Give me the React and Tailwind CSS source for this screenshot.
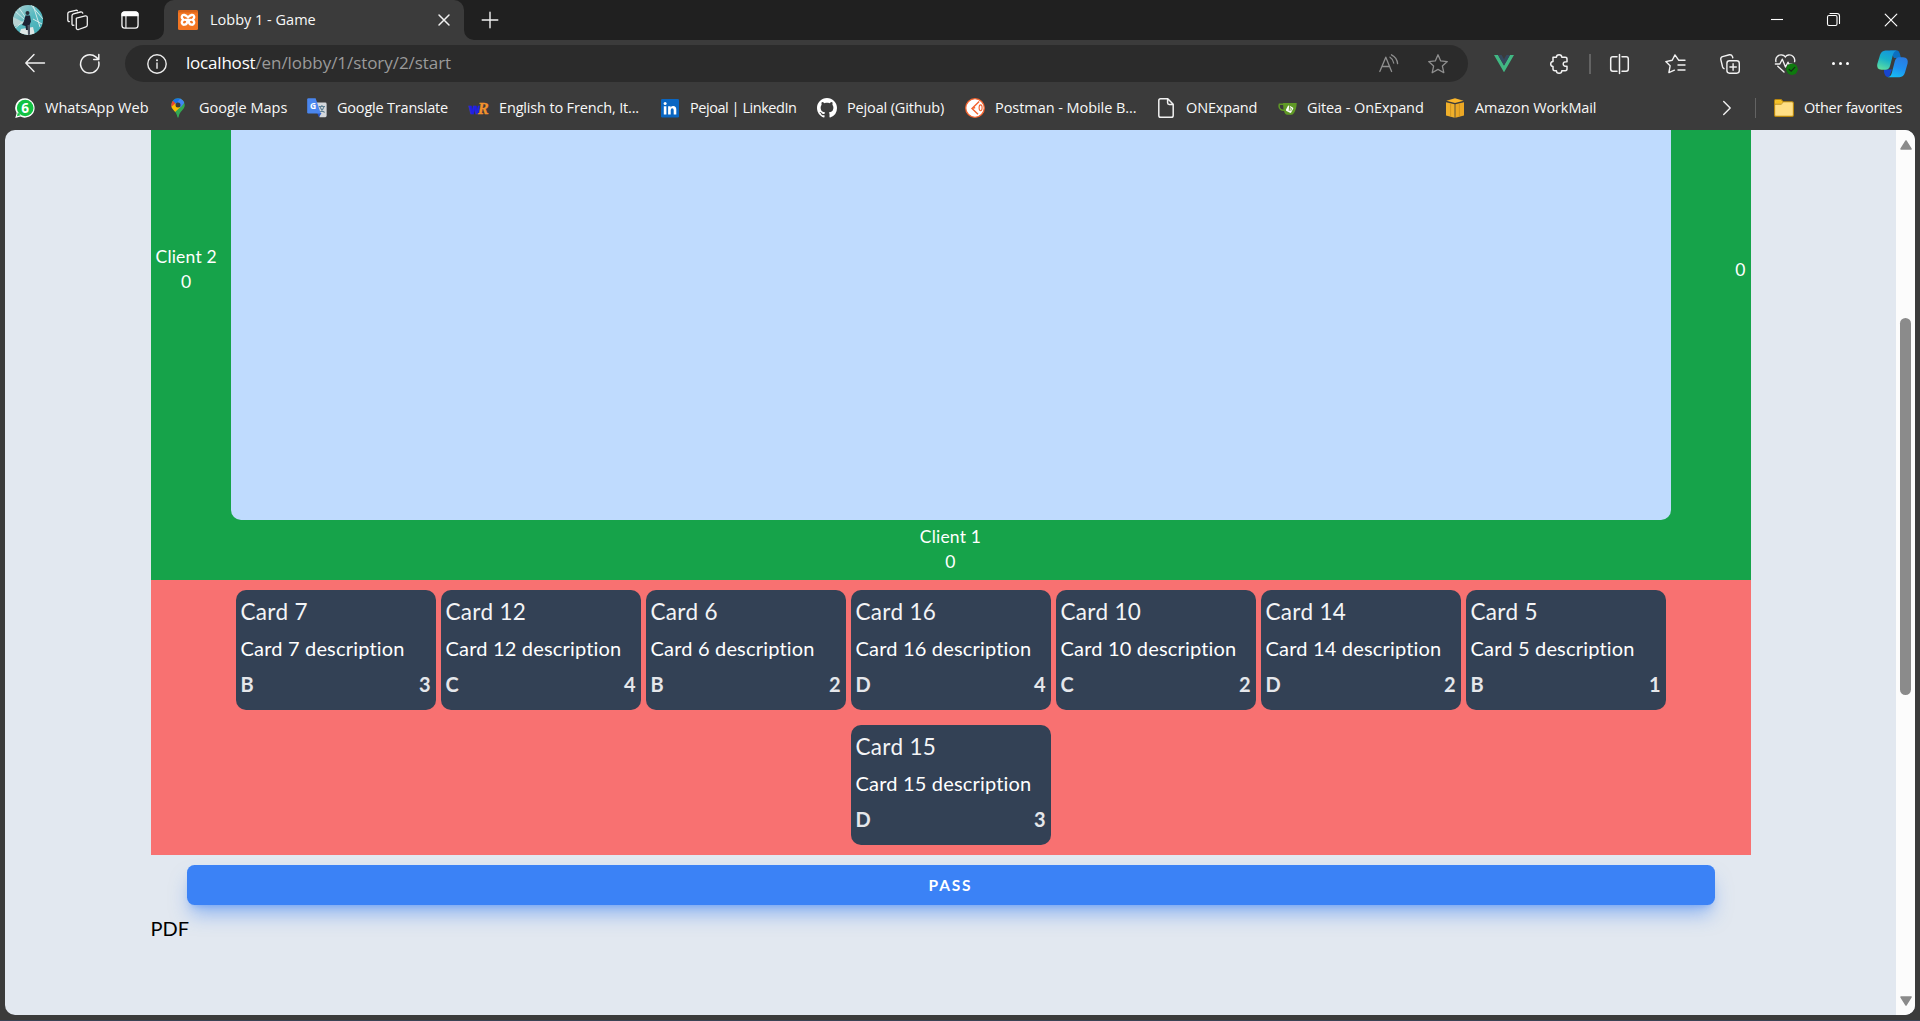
const cards = [
  { id: 7, suit: "B", value: 3 },
  { id: 12, suit: "C", value: 4 },
  { id: 6, suit: "B", value: 2 },
  { id: 16, suit: "D", value: 4 },
  { id: 10, suit: "C", value: 2 },
  { id: 14, suit: "D", value: 2 },
  { id: 5, suit: "B", value: 1 },
  { id: 15, suit: "D", value: 3 },
];

function Line({ w, h, box, sw = 1.4, color = "#f1f1f1", className = "", children }) {
  return (
    <svg width={w} height={h} viewBox={box || `0 0 ${w} ${h}`} fill="none" stroke={color} strokeWidth={sw} strokeLinecap="round" strokeLinejoin="round" className={`shrink-0 overflow-visible ${className}`}>
      {children}
    </svg>
  );
}

function Avatar() {
  return (
    <svg width="30" height="30" viewBox="0 0 30 30" className="shrink-0">
      <defs>
        <clipPath id="face"><circle cx="15" cy="15" r="15" /></clipPath>
        <linearGradient id="sea" x1="0" y1="0" x2="1" y2="1">
          <stop offset="0" stopColor="#b4cfd1" />
          <stop offset="0.5" stopColor="#58bac1" />
          <stop offset="1" stopColor="#3fabb3" />
        </linearGradient>
      </defs>
      <g clipPath="url(#face)">
        <rect width="30" height="30" fill="url(#sea)" />
        <path d="M0 12 L12 18 L0 22Z" fill="#b8d3d3" />
        <path d="M18 0 L30 14 M20 0 L27 22 M1 24 L12 15 M2 6 L12 15 M20 14 L29 19 M6 3 L13 13" stroke="#cfe9e8" strokeWidth="1" />
        <path d="M8 24 L20 22 L22 30 H6Z" fill="#dfe7e6" />
        <circle cx="14.5" cy="8" r="2" fill="#2a2d38" />
        <path d="M12.5 10.5 H17 L18 16.5 L16.6 20 L15.5 25 H13 L12.5 21 L9 20 L10.8 16.5Z" fill="#1d2233" />
        <path d="M14.5 20 L17 20 L17 30 H15Z" fill="#4d5562" />
      </g>
    </svg>
  );
}

function Tab() {
  return (
    <div className="relative flex h-[40px] w-[300px] shrink-0 items-center rounded-t-[10px] bg-[#3b3b3b] pl-[14px]">
      <svg width="10" height="10" className="absolute bottom-0 -left-[10px]"><path d="M10 0 V10 H0 A10 10 0 0 0 10 0Z" fill="#3b3b3b" /></svg>
      <svg width="10" height="10" className="absolute bottom-0 -right-[10px]"><path d="M0 0 V10 H10 A10 10 0 0 1 0 0Z" fill="#3b3b3b" /></svg>
      <svg width="20" height="20" viewBox="0 0 20 20" className="shrink-0">
        <rect width="20" height="20" rx="1.5" fill="#f37623" />
        <path d="M1 0 H19 L20 2.5 H0Z" fill="#d9641a" />
        <path d="M5.6 9.8 C2.4 7.6 4 4.6 6.4 5 C8.2 5.3 9 6.5 10 7.4 C11 6.5 11.8 5.3 13.6 5 C16 4.6 17.6 7.6 14.4 9.8 M5.6 9.8 C2.4 12 4 15 6.4 14.7 C8.2 14.4 9.2 13.2 9.2 11.4 M14.4 9.8 C17.6 12 16 15 13.6 14.7 C11.8 14.4 10.9 13.2 10.9 11.4 M7.2 9.8 H12.8" fill="none" stroke="#fff" strokeWidth="2.3" strokeLinecap="round" strokeLinejoin="round" />
      </svg>
      <span className="-mt-px ml-[12px] flex-1 text-[14.5px] leading-[20px] text-[#f8f8f8]">Lobby 1 - Game</span>
      <Line w={10} h={10} sw={1.5} className="mr-[15px]"><path d="M0 0 L10 10 M10 0 L0 10" /></Line>
    </div>
  );
}

function TitleBar() {
  return (
    <div className="flex h-[40px] items-center bg-[#202020] pl-[13px]">
      <Avatar />
      <Line w={21} h={21} sw={1.3} className="ml-[24px]">
        <path d="M9.5 8.2 L18.3 5.9 Q20.3 5.6 20.3 7.5 V15 Q20.3 16.4 18.9 16.9 L11.5 19.5 Q9.4 19.9 9.3 18 V8.4Z" />
        <path d="M6.9 15.2 Q5 15.7 5 14 V5.8 Q5 4.3 6.4 3.9 L13.5 2 Q15.3 1.7 15.8 3.2" />
        <path d="M2.4 11.6 Q0.8 11.6 0.8 10 V3.6 Q0.9 2.3 2.2 1.9 L8.6 0.3 Q10 0.1 10.4 0.7" />
      </Line>
      <svg width="18" height="18" viewBox="0 0 19 19" className="mr-px ml-[33px] shrink-0">
        <rect x="1" y="1" width="17" height="17" rx="3" fill="none" stroke="#f4f4f4" strokeWidth="1.4" />
        <path d="M0.5 5.5 V3.5 Q0.5 0.5 3.5 0.5 H15.5 Q18.5 0.5 18.5 3.5 V5.5Z" fill="#fff" />
        <path d="M5.2 5 V18" stroke="#f4f4f4" strokeWidth="1.2" />
      </svg>
      <div className="w-[24px] shrink-0" />
      <Tab />
      <Line w={16} h={16} sw={1.4} className="-mt-px ml-[18px]"><path d="M8 0.2 V15.8 M0.2 8 H15.8" /></Line>
      <div className="flex-1" />
      <Line w={12} h={13} sw={1.1} color="#fff"><path d="M0 5.5 H12" strokeLinecap="butt" /></Line>
      <Line w={13} h={13} sw={1.1} color="#fff" className="-mt-px ml-[44px]">
        <rect x="0.5" y="2.5" width="9.5" height="10" rx="1.5" />
        <path d="M3 0.5 H10 Q12.5 0.5 12.5 3 V10.5" />
      </Line>
      <Line w={12} h={12} sw={1.2} color="#fff" className="-mt-px mr-[23px] ml-[45px]"><path d="M0.2 0.2 L11.8 11.8 M11.8 0.2 L0.2 11.8" /></Line>
    </div>
  );
}

function Cell({ className, children }) {
  return <div className={`flex shrink-0 items-center justify-center ${className}`}>{children}</div>;
}

function Toolbar() {
  return (
    <div className="flex h-[47px] items-center pl-[10px]">
      <Cell className="w-[50px] pb-px">
        <Line w={20} h={18} sw={1.4}><path d="M9 0.5 L0.8 9 L9 17.5 M1 9 H19.5" /></Line>
      </Cell>
      <Cell className="w-[60px]">
        <Line w={20} h={20} sw={1.5}><path d="M18.8 8 A9.2 9.2 0 1 1 15.8 2.9 L18.7 5.4 M18.8 0.6 V5.6 H13.7" /></Line>
      </Cell>
      <div className="ml-[5px] flex h-[37px] w-[1343px] shrink-0 items-center rounded-full bg-[#2b2b2b] pr-[20px] pl-[22px]">
        <svg width="20" height="20" viewBox="0 0 20 20" className="shrink-0">
          <circle cx="10" cy="10" r="9.2" fill="none" stroke="#ececec" strokeWidth="1.4" />
          <circle cx="10" cy="6.2" r="1" fill="#ececec" />
          <path d="M10 9 V14.2" stroke="#ececec" strokeWidth="1.4" strokeLinecap="round" />
        </svg>
        <div className="-mt-px ml-[19px] flex-1 text-[17px] leading-[24px] tracking-[-0.06px] text-[#9a9a9a]">
          <span className="tracking-[-0.2px] text-white">localhost</span>/en/lobby/1/story/2/start
        </div>
        <Line w={20} h={20} sw={1.3} color="#8f8f8f">
          <path d="M0.8 17.5 L6.8 3.2 L12.6 17.5 M2.9 12.5 H10.7" />
          <path d="M11 3.2 Q14 5 14.7 9" />
          <path d="M12.5 0.8 Q18 3.5 18.6 9.6" />
        </Line>
        <Line w={20} h={20} sw={1.3} color="#8f8f8f" className="ml-[29px]">
          <path d="M10 0.8 L12.7 6.9 L19.3 7.6 L14.4 12.1 L15.8 18.7 L10 15.4 L4.2 18.7 L5.6 12.1 L0.7 7.6 L7.3 6.9Z" />
        </Line>
      </div>
      <Cell className="ml-[4px] w-[64px]">
        <svg width="20" height="17" viewBox="0 0 20 17">
          <path d="M0 0 H4 L10 10.4 L16 0 H20 L10 17.3Z" fill="#41b883" />
          <path d="M4 0 H7.6 L10 4.2 L12.4 0 H16 L10 10.4Z" fill="#35495e" />
        </svg>
      </Cell>
      <Cell className="w-[46px]">
        <Line w={18} h={20} sw={1.5}>
          <path d="M3 3.3 H6.4 Q6.5 0.7 9.1 0.7 Q11.7 0.7 11.8 3.3 H15.2 Q17 3.3 17 5 V7.7 Q13.3 7.4 13.2 10 Q13.3 12.6 17 12.3 V15 Q17 16.7 15.2 16.7 H11.8 Q11.7 19.3 9.1 19.3 Q6.5 19.3 6.4 16.7 H4.8 Q3 16.7 3 15 V12.6 Q0.7 12.3 0.7 10 Q0.7 7.7 3 7.4Z" />
        </Line>
      </Cell>
      <Cell className="w-[16px]"><div className="h-[20px] w-[1.5px] bg-[#636363]" /></Cell>
      <Cell className="w-[43px]">
        <Line w={19} h={20} sw={1.5}>
          <path d="M7 2.8 H2.8 Q0.7 2.8 0.7 5 V15 Q0.7 17.2 2.8 17.2 H7 M12 2.8 H16.2 Q18.3 2.8 18.3 5 V15 Q18.3 17.2 16.2 17.2 H12 M9.5 0.5 V19.5" />
        </Line>
      </Cell>
      <Cell className="w-[68px]">
        <Line w={21} h={20} sw={1.4}>
          <path d="M13.6 6.2 L10 0.9 L7.2 6.3 L0.8 7.6 L5.1 11.8 L3.9 18.6 L9.4 16.2 M13.6 6.2 H20 M13 11 H20 M13 16 H20" />
        </Line>
      </Cell>
      <Cell className="w-[42px]">
        <Line w={20} h={20} sw={1.4}>
          <rect x="6.9" y="6.8" width="12.4" height="12.4" rx="2.6" />
          <path d="M13.1 9.8 V16.2 M9.9 13 H16.3" />
          <path d="M4 14.7 Q3 14.3 2.6 13 L0.8 5.6 Q0.4 3.3 2.5 2.6 L9.4 0.8 Q11.7 0.5 12.4 2.4 L12.8 3.8" />
        </Line>
      </Cell>
      <Cell className="w-[70px]">
        <svg width="22" height="20" viewBox="0 0 22 20" fill="none" className="overflow-visible">
          <path d="M0.9 7.6 C-0.1 3 4 0.3 7.2 1 C8.8 1.3 9.8 2.2 10.3 3 C10.8 2.2 11.8 1.3 13.4 1 C16.8 0.3 20.5 3.4 19.6 7.6 M2.8 12.2 L9 18" stroke="#f1f1f1" strokeWidth="1.4" strokeLinecap="round" />
          <path d="M0.4 10 H4.8 L7.3 5.2 L10.5 13 L13 8.2 L14 10.2 H17" stroke="#f1f1f1" strokeWidth="1.4" strokeLinejoin="round" strokeLinecap="round" />
          <circle cx="17" cy="15.2" r="5.8" fill="#0e7a0e" />
          <path d="M14.2 15.4 L16.2 17.2 L19.8 13.4" stroke="#172c17" strokeWidth="1.3" strokeLinecap="round" />
        </svg>
      </Cell>
      <Cell className="w-[38px] gap-[4px]">
        <span className="size-[3px] rounded-full bg-white" />
        <span className="size-[3px] rounded-full bg-white" />
        <span className="size-[3px] rounded-full bg-white" />
      </Cell>
      <Cell className="w-[61px] pl-[6px]">
        <svg width="31" height="28" viewBox="0 0 31 28" className="overflow-visible">
          <defs>
            <linearGradient id="cpA" x1="0.6" y1="0" x2="0.2" y2="1">
              <stop offset="0" stopColor="#1497dc" />
              <stop offset="0.45" stopColor="#18b0c8" />
              <stop offset="1" stopColor="#5fe0a0" />
            </linearGradient>
            <linearGradient id="cpB" x1="0.7" y1="0" x2="0.3" y2="1">
              <stop offset="0" stopColor="#2a7be0" />
              <stop offset="0.5" stopColor="#1f8ff0" />
              <stop offset="1" stopColor="#16bdf6" />
            </linearGradient>
          </defs>
          <path d="M7 19.5 H15 L12.5 26 Q11.5 27.5 10 26.8 Q7.8 26 7 22Z" fill="#1746d0" />
          <path d="M13 0.5 H20.5 Q22 1 22.8 3.5 L24 8 H17Z" fill="#0b6fc0" />
          <path d="M8.5 0.5 H20 Q17 1 16 4.6 L13 16 Q12 19.8 8.5 19.8 H4.5 Q-0.8 19.6 0.3 14 L3 5 Q4.3 0.8 8.5 0.5Z" fill="url(#cpA)" />
          <path d="M21.5 7.2 H26 Q31.8 7.8 30.6 13.4 L28 22.5 Q26.6 27 22.4 27.2 H10.5 Q13.8 26.8 14.8 23 L17.8 11.3 Q18.7 7.6 21.5 7.2Z" fill="url(#cpB)" />
        </svg>
      </Cell>
    </div>
  );
}

const WhatsApp = () => (
  <svg width="20" height="20" viewBox="0 0 20 20">
    <path d="M10.2 0.3 A9.7 9.7 0 1 1 5.4 18.6 L0.3 20 L1.6 15 A9.7 9.7 0 0 1 10.2 0.3Z" fill="#fff" />
    <circle cx="10.2" cy="10" r="8.3" fill="#12c143" />
    <path d="M2 18.2 L2.8 14.5 L5.6 17.2Z" fill="#12c143" />
    <text x="10.2" y="14.8" textAnchor="middle" fontSize="13.5" fontWeight="700" fontFamily="Open Sans, sans-serif" fill="#fff">6</text>
  </svg>
);

const Maps = () => (
  <svg width="20" height="20" viewBox="0 0 20 20">
    <defs>
      <clipPath id="pin"><path d="M10 0.2 A6.8 6.8 0 0 1 16.8 7 C16.8 11.5 11.5 13 10.6 19 Q10 20.4 9.4 19 C8.5 13 3.2 11.5 3.2 7 A6.8 6.8 0 0 1 10 0.2Z" /></clipPath>
    </defs>
    <g clipPath="url(#pin)">
      <rect width="20" height="20" fill="#34a853" />
      <path d="M0 9 L4.8 2.6 L8.2 5.6 L3.4 10.4Z" fill="#ea4335" />
      <path d="M2.5 9.5 L8 5 L13 8.5 L6 15Z" fill="#fbbc04" />
      <path d="M4.8 2.6 L7 -1 H13 L12.5 1 L8.2 6Z" fill="#1a73e8" />
      <path d="M12.4 0 L17 4 L12.6 9.5 L9.5 4Z" fill="#4285f4" />
    </g>
    <circle cx="10" cy="7" r="2.5" fill="#3b3b3b" />
  </svg>
);

const Translate = () => (
  <svg width="20" height="20" viewBox="0 0 20 20">
    <path d="M9 4.6 H18.3 Q19.6 4.6 19.6 6 V17.8 Q19.6 19.2 18.3 19.2 H12.5Z" fill="#d5d8dc" />
    <path d="M11.8 8.5 H18 M14.9 7 V8.5 M17 8.6 Q16 12.5 12.5 14.5 M13 9 Q14.5 12.5 17.6 14.5" stroke="#5e7f92" strokeWidth="1.1" fill="none" />
    <path d="M10.2 15 H14.5 L12 19.3Z" fill="#2a56c6" />
    <path d="M1.4 0.3 H8.6 L13.8 15.6 H1.4 Q0.2 15.6 0.2 14.3 V1.6 Q0.2 0.3 1.4 0.3Z" fill="#4a86ee" />
    <text x="5.9" y="11.1" textAnchor="middle" fontSize="8.5" fontWeight="700" fontFamily="Open Sans, sans-serif" fill="#fff">G</text>
  </svg>
);

const WordRef = () => (
  <svg width="20" height="20" viewBox="0 0 20 20" className="overflow-visible">
    <text x="0" y="15.5" fontSize="13.5" fontWeight="800" fontFamily="Open Sans, sans-serif" fill="#2020e6" stroke="#2020e6" strokeWidth="0.5">w</text>
    <text x="8.8" y="15.6" fontSize="16.5" fontWeight="700" fontStyle="italic" fontFamily="Liberation Serif, serif" fill="#f2922c" stroke="#f2922c" strokeWidth="0.3">R</text>
  </svg>
);

const LinkedIn = () => (
  <svg width="18" height="20" viewBox="0 0 18 20">
    <rect y="1" width="18" height="18.5" rx="1.2" fill="#0a66c2" />
    <path d="M2.8 8.2 H5.4 V16.6 H2.8Z M7.1 8.2 H9.6 V9.4 Q10.4 8 12.2 8 Q15.3 8 15.3 11.6 V16.6 H12.7 V12.2 Q12.7 10.2 11.2 10.2 Q9.7 10.2 9.7 12.2 V16.6 H7.1Z" fill="#fff" />
    <circle cx="4.1" cy="5.4" r="1.5" fill="#fff" />
  </svg>
);

const Github = () => (
  <svg width="20" height="20" viewBox="0 0 16 16">
    <path fill="#fff" d="M8 0C3.58 0 0 3.58 0 8c0 3.54 2.29 6.53 5.47 7.59.4.07.55-.17.55-.38 0-.19-.01-.82-.01-1.49-2.01.37-2.53-.49-2.69-.94-.09-.23-.48-.94-.82-1.13-.28-.15-.68-.52-.01-.53.63-.01 1.08.58 1.23.82.72 1.21 1.87.87 2.33.66.07-.52.28-.87.51-1.07-1.78-.2-3.64-.89-3.64-3.95 0-.87.31-1.59.82-2.15-.08-.2-.36-1.02.08-2.12 0 0 .67-.21 2.2.82.64-.18 1.32-.27 2-.27s1.36.09 2 .27c1.53-1.04 2.2-.82 2.2-.82.44 1.1.16 1.92.08 2.12.51.56.82 1.27.82 2.15 0 3.07-1.87 3.75-3.65 3.95.29.25.54.73.54 1.48 0 1.07-.01 1.93-.01 2.2 0 .21.15.46.55.38A8.01 8.01 0 0 0 16 8c0-4.42-3.58-8-8-8" />
  </svg>
);

const Postman = () => (
  <svg width="20" height="20" viewBox="0 0 20 20" fill="none">
    <circle cx="10" cy="10" r="9.3" fill="#fff" stroke="#f2622e" strokeWidth="1.3" />
    <path d="M14.2 3.6 L7 10.5 L13 16.2 M7.4 10.4 L10.2 9.6" stroke="#f2622e" strokeWidth="1.4" />
    <ellipse cx="15.6" cy="9.8" rx="1.5" ry="2.9" stroke="#f2622e" strokeWidth="1.1" />
  </svg>
);

const Doc = () => (
  <Line w={16} h={20} sw={1.5}><path d="M2.6 0.8 H9.8 L15.2 6.2 V17.4 Q15.2 19.2 13.4 19.2 H2.6 Q0.8 19.2 0.8 17.4 V2.6 Q0.8 0.8 2.6 0.8Z M9.6 1 V4.8 Q9.6 6.4 11.2 6.4 H15" /></Line>
);

const Gitea = () => (
  <svg width="19" height="20" viewBox="0 0 19 20" fill="none">
    <path d="M6 6.3 H1.4 Q0.4 9.8 2.6 11.4 Q4.5 12.6 6.5 12" stroke="#609926" strokeWidth="1.5" />
    <path d="M5 4.9 H18.7 Q18.6 11.5 15.4 15.8 Q14.8 16.8 13.4 16.8 H9 Q7.6 16.8 6.6 14.8 Q5 11 5 4.9Z" fill="#609926" />
    <rect x="8.6" y="8.2" width="6" height="6" rx="1" fill="#fff" transform="rotate(28 11.6 11.2)" />
    <path d="M11.9 5 L11.2 12.8 M11.6 9.4 L13.4 10.6 L12.8 12.8" stroke="#609926" strokeWidth="0.9" />
  </svg>
);

const Cube = () => (
  <svg width="18" height="20" viewBox="0 0 18 20">
    <path d="M0 4.2 L8.6 6.2 V19.8 L0 17.4Z" fill="#f0b02b" />
    <path d="M18 4.2 L9.4 6.2 V19.8 L18 17.4Z" fill="#eca825" />
    <path d="M9 0.2 L17.6 2.8 L9 5 L0.4 2.8Z" fill="#fbb62c" />
    <path d="M4.6 5.6 V18.4 M13.4 5.6 V18.4" stroke="#c58c1c" strokeWidth="0.7" />
  </svg>
);

const bookmarks = [
  { label: "WhatsApp Web", Icon: WhatsApp, cls: "w-[152px]", icon: "w-[20px]" },
  { label: "Google Maps", Icon: Maps, cls: "w-[140px]", icon: "w-[22px]" },
  { label: "Google Translate", Icon: Translate, cls: "w-[162px] tracking-[-0.2px]", icon: "w-[20px]" },
  { label: "English to French, It...", Icon: WordRef, cls: "w-[191px] tracking-[-0.16px]", icon: "w-[20px]" },
  { label: "Pejoal | LinkedIn", Icon: LinkedIn, cls: "w-[157px] tracking-[-0.45px]", icon: "w-[20px]" },
  { label: "Pejoal (Github)", Icon: Github, cls: "w-[148px] tracking-[-0.15px]", icon: "w-[20px]" },
  { label: "Postman - Mobile B...", Icon: Postman, cls: "w-[191px] tracking-[-0.06px]", icon: "w-[20px]" },
  { label: "ONExpand", Icon: Doc, cls: "w-[121px] tracking-[-0.15px]", icon: "w-[20px]" },
  { label: "Gitea - OnExpand", Icon: Gitea, cls: "w-[168px] tracking-[-0.1px]", icon: "w-[20px]" },
  { label: "Amazon WorkMail", Icon: Cube, cls: "w-[160px] tracking-[-0.1px]", icon: "w-[20px]" },
];

function Bookmarks() {
  return (
    <div className="flex h-[43px] items-center pb-px pl-[15px] text-[14.5px] leading-[20px] text-[#f8f8f8]">
      {bookmarks.map(({ label, Icon, cls, icon }) => (
        <div key={label} className={`flex shrink-0 items-center gap-[10px] whitespace-nowrap ${cls}`}>
          <span className={`flex shrink-0 justify-center ${icon}`}><Icon /></span>
          <span className="pb-px">{label}</span>
        </div>
      ))}
      <div className="flex-1" />
      <Line w={8} h={14} sw={1.4}><path d="M0.7 0.5 L7.2 7 L0.7 13.5" /></Line>
      <div className="ml-[24px] h-[20px] w-px bg-[#636363]" />
      <svg width="20" height="18" viewBox="0 0 20 18" className="ml-[18px] shrink-0">
        <path d="M0.6 2 Q0.6 0.6 2 0.6 H7 L9.2 2.8 H18 Q19.4 2.8 19.4 4.2 V16 Q19.4 17.4 18 17.4 H2 Q0.6 17.4 0.6 16Z" fill="#ffdf85" stroke="#b8860b" strokeWidth="1.1" />
        <path d="M1.2 1.2 H6.8 L8.8 3 L7 4.8 H1.2Z" fill="#f5c022" />
        <path d="M1 5.2 H7.2 L9.4 3" fill="none" stroke="#b8860b" strokeWidth="0.9" />
      </svg>
      <span className="mr-[17px] ml-[10px] w-[99px] pb-px whitespace-nowrap tracking-[-0.25px]">Other favorites</span>
    </div>
  );
}

function Card({ id, suit, value }) {
  return (
    <div className="h-[120px] w-[200px] rounded-[10px] bg-[#334155] px-[5px] pt-[4px]">
      <div className="text-[22.5px] leading-[35px] tracking-[0.32px] text-gray-100">Card {id}</div>
      <div className="mt-[4px] text-[20px] leading-[30px] tracking-[0.18px] text-white">Card {id} description</div>
      <div className="mt-[6px] flex justify-between text-[20px] leading-[30px] font-bold text-gray-200">
        <span>{suit}</span>
        <span>{value}</span>
      </div>
    </div>
  );
}

function Board() {
  return (
    <div className="-mt-[110px] bg-[#16a34a] text-[17.5px] leading-[25px] tracking-[0.2px] text-white">
      <div className="flex h-[500px]">
        <div className="flex w-[80px] flex-col items-start justify-center px-[5px] pb-[2px]">
          <div className="text-center">
            <div>Client 2</div>
            <div>0</div>
          </div>
        </div>
        <div className="flex-1 rounded-[10px] bg-[#bfdbfe]" />
        <div className="flex w-[80px] flex-col items-end justify-center px-[5px] pb-[2px]">0</div>
      </div>
      <div className="h-[60px] px-[5px] pt-[4px] text-center">
        <div>Client 1</div>
        <div>0</div>
      </div>
    </div>
  );
}

function Scrollbar() {
  return (
    <div className="flex w-[19px] shrink-0 flex-col items-center bg-[#fcfcfc]">
      <svg width="12" height="10" viewBox="0 0 12 10" className="mt-[10px] shrink-0"><path d="M6 1 L11 9 H1Z" fill="#8b8b8b" stroke="#8b8b8b" strokeWidth="1.5" strokeLinejoin="round" /></svg>
      <div className="mt-[168px] h-[377px] w-[11px] shrink-0 rounded-full bg-[#8b8b8b]" />
      <div className="flex-1" />
      <svg width="12" height="10" viewBox="0 0 12 10" className="mb-[9px] shrink-0"><path d="M6 9 L11 1 H1Z" fill="#8b8b8b" stroke="#8b8b8b" strokeWidth="1.5" strokeLinejoin="round" /></svg>
    </div>
  );
}

export default function App() {
  return (
    <div className="flex h-[1021px] w-[1920px] flex-col overflow-hidden bg-[#3b3b3b] font-['Open_Sans',sans-serif]">
      <TitleBar />
      <Toolbar />
      <Bookmarks />
      <div className="mx-[5px] flex h-[885px] shrink-0 overflow-hidden rounded-[10px] bg-[#e2e8f0] font-['Lato',sans-serif]">
        <div className="flex-1 overflow-hidden">
          <div className="mx-auto w-[1600px]">
            <Board />
            <div className="flex flex-wrap justify-center gap-x-[5px] gap-y-[15px] bg-[#f87171] px-[80px] py-[10px]">
              {cards.map((card) => <Card key={card.id} {...card} />)}
            </div>
            <button className="mx-auto mt-[10px] flex h-[40px] w-[1528px] items-center justify-center rounded-[7.5px] bg-[#3b82f6] pb-px text-[15.5px] leading-[20px] font-bold tracking-[1.8px] text-white shadow-[0_12.5px_18.75px_-3.75px_rgba(59,130,246,0.5),0_5px_7.5px_-5px_rgba(59,130,246,0.5)]">
              PASS
            </button>
            <div className="mt-[8px] text-[20px] leading-[30px] text-black">PDF</div>
          </div>
        </div>
        <Scrollbar />
      </div>
      <div className="flex-1" />
      <div className="h-px shrink-0 bg-[#3a4454]" />
    </div>
  );
}
